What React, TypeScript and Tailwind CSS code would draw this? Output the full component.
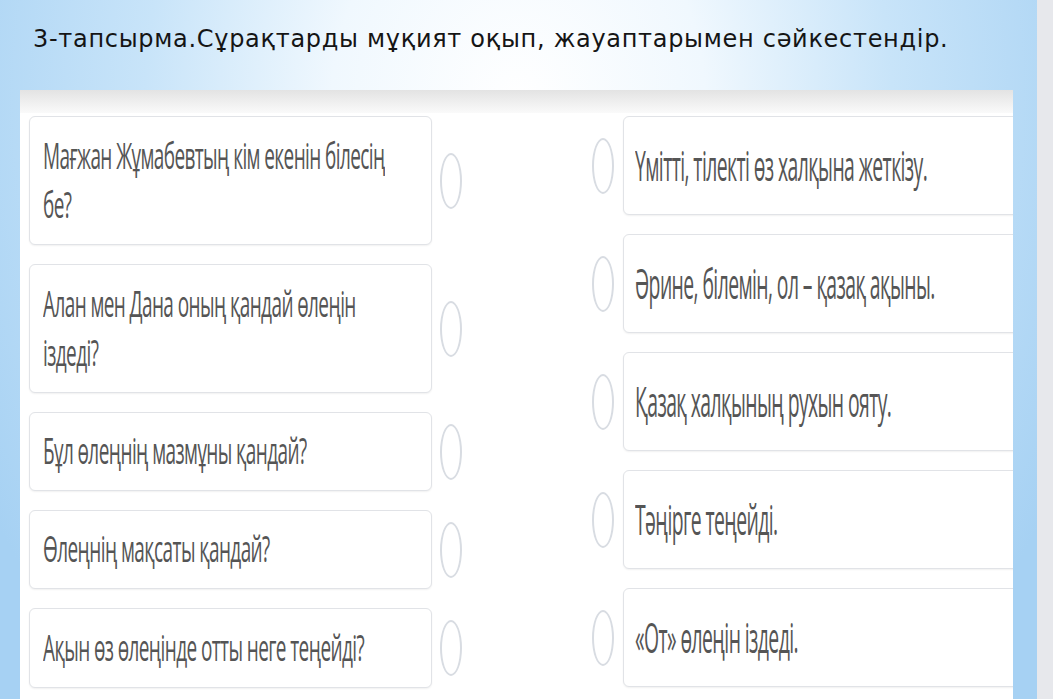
import React from "react";

const leftItems: { h: string; lines: string[] }[] = [
  { h: "h-[129px]", lines: ["Мағжан Жұмабевтың кім екенін білесің", "бе?"] },
  { h: "h-[129px]", lines: ["Алан мен Дана оның қандай өлеңін", "іздеді?"] },
  { h: "h-[79px]", lines: ["Бұл өлеңнің мазмұны қандай?"] },
  { h: "h-[79px]", lines: ["Өлеңнің мақсаты қандай?"] },
  { h: "h-[80px]", lines: ["Ақын өз өлеңінде отты неге теңейді?"] },
];

const rightItems: string[] = [
  "Үмітті, тілекті өз халқына жеткізу.",
  "Әрине, білемін, ол – қазақ ақыны.",
  "Қазақ халқының рухын ояту.",
  "Тәңірге теңейді.",
  "«От» өлеңін іздеді.",
];

function Ellipse() {
  return (
    <div className="w-[22px] h-[56px] shrink-0 rounded-[50%] border-[2.5px] border-[#d8dce2] bg-white" />
  );
}

export default function App() {
  return (
    <div className="w-[1053px] h-[699px] flex overflow-hidden">
      <div className="w-[1037px] h-full flex flex-col bg-[radial-gradient(ellipse_60%_110%_at_50%_15%,#ffffff_0%,#f0f8fe_30%,#c8e4f9_60%,#a6d1f3_100%)]">
        <div
          className="h-[90px] pl-[33px] pt-[24px] text-[24px] leading-[30px] tracking-[0.7px] text-[#151515]"
          style={{ fontFamily: '"DejaVu Sans", sans-serif' }}
        >
          3-тапсырма.Сұрақтарды мұқият оқып, жауаптарымен сәйкестендір.
        </div>
        <div className="ml-[20px] w-[993px] flex-1 bg-white overflow-hidden flex flex-col">
          <div className="h-[23px] bg-gradient-to-b from-[#e3e3e3] to-[#fafafa]" />
          <div
            className="flex pt-[3px]"
            style={{ fontFamily: '"Open Sans", "Noto Sans", sans-serif' }}
          >
            <div className="pl-[9px] flex flex-col gap-[19px]">
              {leftItems.map((it, i) => (
                <div key={i} className="flex items-center">
                  <div
                    className={`w-[403px] ${it.h} shrink-0 rounded-[6px] border border-[#e1e3e7] shadow-[0_1px_2px_rgba(0,0,0,0.06)] bg-white flex items-center pl-[13px]`}
                  >
                    <span className="inline-block scale-y-[1.95] text-[19px] leading-[25px] tracking-[-0.6px] text-[#555555]">
                      {it.lines.map((l, j) => (
                        <React.Fragment key={j}>
                          {j > 0 && <br />}
                          {l}
                        </React.Fragment>
                      ))}
                    </span>
                  </div>
                  <div className="ml-[8px]">
                    <Ellipse />
                  </div>
                </div>
              ))}
            </div>
            <div className="ml-[130px] flex flex-col gap-[19px]">
              {rightItems.map((t, i) => (
                <div key={i} className="flex items-center h-[99px]">
                  <Ellipse />
                  <div className="ml-[9px] w-[420px] h-[99px] shrink-0 rounded-[6px] border border-[#e1e3e7] shadow-[0_1px_2px_rgba(0,0,0,0.06)] bg-white flex items-center pl-[11px]">
                    <span className="inline-block scale-y-[2.15] text-[19.4px] leading-[24px] tracking-[-0.6px] text-[#555555]">
                      {t}
                    </span>
                  </div>
                </div>
              ))}
            </div>
          </div>
        </div>
      </div>
      <div className="w-[16px] h-full bg-[#e7e8ec]" />
    </div>
  );
}
